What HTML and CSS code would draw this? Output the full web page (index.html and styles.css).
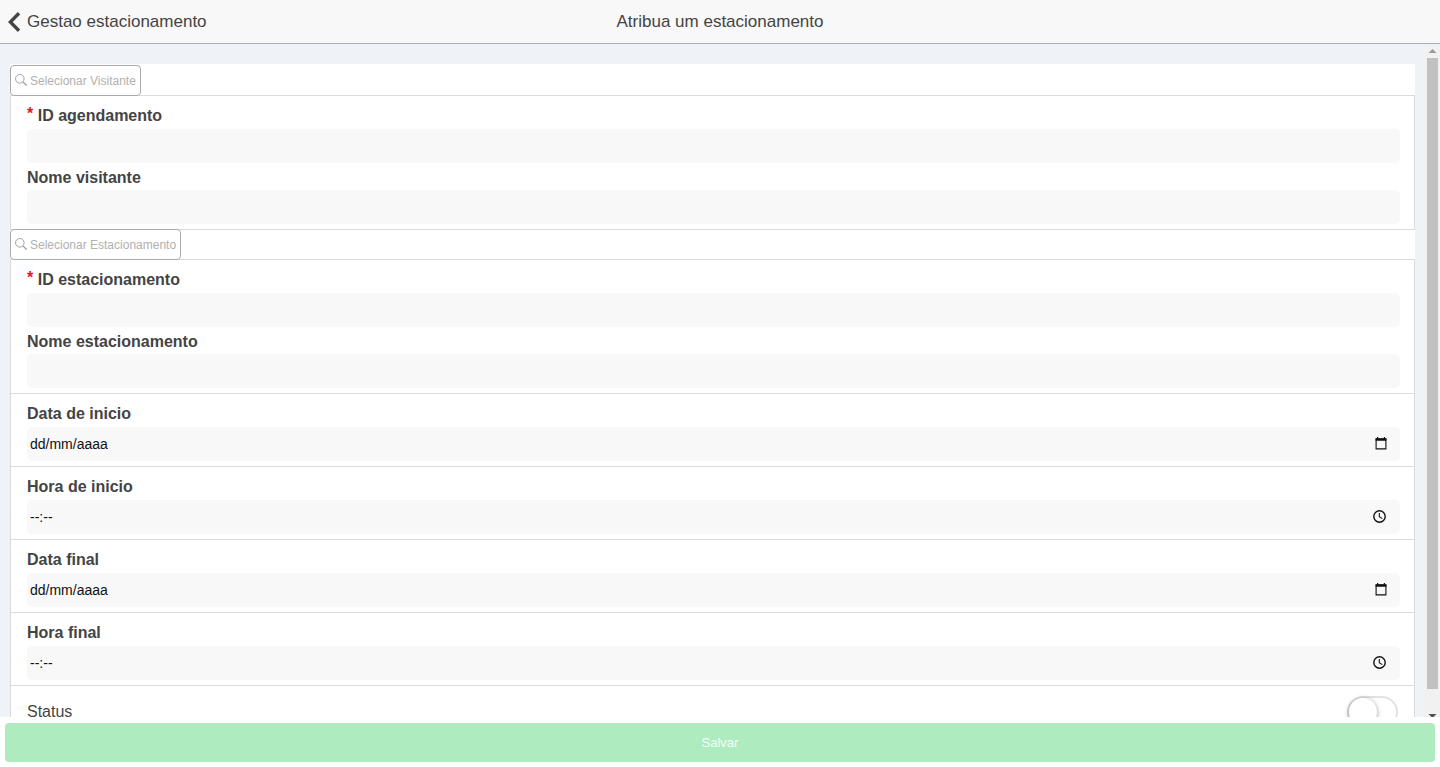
FILE: index.html
```html
<!DOCTYPE html>
<html lang="pt">
  <head>
    <meta charset="UTF-8" />
    <meta name="viewport" content="width=device-width, initial-scale=1.0" />
    <title>Atribua um estacionamento</title>
    <link rel="stylesheet" href="styles.css" />
  </head>
  <body>
    <!-- Header -->
    <header class="navbar">
      <a class="back-link" href="#">
        <svg width="13" height="20" viewBox="0 0 13 20" aria-hidden="true">
          <path d="M11 1.3 2.3 10l8.7 8.7" fill="none" stroke="#444" stroke-width="3.4" />
        </svg>
        Gestao estacionamento
      </a>
      <h1 class="navbar-title">Atribua um estacionamento</h1>
    </header>

    <!-- Form -->
    <div class="view">
      <main class="content">
        <form class="panel" id="parking-form">
          <div class="toolbar">
            <button class="search-button" type="button">
              <svg width="12" height="14" viewBox="0 0 12 14" fill="none" stroke="#999" aria-hidden="true">
                <circle cx="4.8" cy="4.8" r="4.3" stroke-width="0.9" />
                <path d="M7.9 7.9 11.6 11.6" stroke-width="1.3" />
              </svg>
              Selecionar Visitante
            </button>
          </div>
          <div class="group">
            <div class="field">
              <label for="id-agendamento"><span class="required">*</span> ID agendamento</label>
              <input class="field-input" id="id-agendamento" type="text" readonly />
            </div>
            <div class="field">
              <label for="nome-visitante">Nome visitante</label>
              <input class="field-input" id="nome-visitante" type="text" readonly />
            </div>
          </div>

          <div class="toolbar toolbar-lined">
            <button class="search-button" type="button">
              <svg width="12" height="14" viewBox="0 0 12 14" fill="none" stroke="#999" aria-hidden="true">
                <circle cx="4.8" cy="4.8" r="4.3" stroke-width="0.9" />
                <path d="M7.9 7.9 11.6 11.6" stroke-width="1.3" />
              </svg>
              Selecionar Estacionamento
            </button>
          </div>
          <div class="group">
            <div class="field">
              <label for="id-estacionamento"><span class="required">*</span> ID estacionamento</label>
              <input class="field-input" id="id-estacionamento" type="text" readonly />
            </div>
            <div class="field">
              <label for="nome-estacionamento">Nome estacionamento</label>
              <input class="field-input" id="nome-estacionamento" type="text" readonly />
            </div>
          </div>

          <div class="group">
            <div class="field">
              <label for="data-inicio">Data de inicio</label>
              <div class="picker">
                <input class="field-input" id="data-inicio" type="text" placeholder="dd/mm/aaaa" />
                <svg class="picker-icon" width="12" height="14" viewBox="0 0 12 14" aria-hidden="true">
                  <path d="M1.1 2h9.8v9.9H1.1z" fill="none" stroke="#111" stroke-width="1.1" />
                  <path d="M.6 1.3h10.8v2.5H.6zM2 0h1.2v2H2zM8.8 0H10v2H8.8z" fill="#111" />
                </svg>
              </div>
            </div>
          </div>

          <div class="group">
            <div class="field">
              <label for="hora-inicio">Hora de inicio</label>
              <div class="picker">
                <input class="field-input" id="hora-inicio" type="text" placeholder="--:--" />
                <svg class="picker-icon" width="14" height="14" viewBox="0 0 14 14" fill="none" stroke="#111" aria-hidden="true">
                  <circle cx="6.5" cy="6.5" r="5.7" stroke-width="1.4" />
                  <path d="M6.3 3v3.8l3 1.8" stroke-width="1.1" />
                </svg>
              </div>
            </div>
          </div>

          <div class="group">
            <div class="field">
              <label for="data-final">Data final</label>
              <div class="picker">
                <input class="field-input" id="data-final" type="text" placeholder="dd/mm/aaaa" />
                <svg class="picker-icon" width="12" height="14" viewBox="0 0 12 14" aria-hidden="true">
                  <path d="M1.1 2h9.8v9.9H1.1z" fill="none" stroke="#111" stroke-width="1.1" />
                  <path d="M.6 1.3h10.8v2.5H.6zM2 0h1.2v2H2zM8.8 0H10v2H8.8z" fill="#111" />
                </svg>
              </div>
            </div>
          </div>

          <div class="group">
            <div class="field">
              <label for="hora-final">Hora final</label>
              <div class="picker">
                <input class="field-input" id="hora-final" type="text" placeholder="--:--" />
                <svg class="picker-icon" width="14" height="14" viewBox="0 0 14 14" fill="none" stroke="#111" aria-hidden="true">
                  <circle cx="6.5" cy="6.5" r="5.7" stroke-width="1.4" />
                  <path d="M6.3 3v3.8l3 1.8" stroke-width="1.1" />
                </svg>
              </div>
            </div>
          </div>

          <div class="group status-row">
            <label for="status">Status</label>
            <input class="switch" id="status" type="checkbox" />
          </div>
        </form>
      </main>

      <div class="scrollbar" aria-hidden="true">
        <svg class="scrollbar-arrow" width="15" height="14" viewBox="0 0 15 14">
          <path d="M3.5 9 7.5 5l4 4z" fill="#999" />
        </svg>
        <div class="scrollbar-track">
          <div class="scrollbar-thumb"></div>
        </div>
        <svg class="scrollbar-arrow" width="15" height="14" viewBox="0 0 15 14">
          <path d="M3.5 6l4 4 4-4z" fill="#505050" />
        </svg>
      </div>
    </div>

    <!-- Footer -->
    <footer class="footer">
      <button class="save-button" type="submit" form="parking-form">Salvar</button>
    </footer>
  </body>
</html>
```
FILE: styles.css
```css
:root {
  --page-bg: #eff3f7;
  --bar-bg: #f8f8f8;
  --bar-border: #a9b1b4;
  --line: #d9dbdd;
  --text: #444;
  --muted: #b0b0b0;
  --save-bg: #aeebbf;
}

/* Basic Reset */
* {
  margin: 0;
  padding: 0;
  box-sizing: border-box;
}

body {
  display: flex;
  flex-direction: column;
  height: 100vh;
  overflow: hidden;
  background: var(--page-bg);
  color: var(--text);
  font-family: "Liberation Sans", Arial, sans-serif;
  font-size: 16px;
}

button,
input {
  font-family: inherit;
}

/* Header */
.navbar {
  display: grid;
  grid-template-columns: 1fr auto 1fr;
  align-items: center;
  flex: none;
  height: 44px;
  padding: 0 8px;
  background: var(--bar-bg);
  border-bottom: 1px solid var(--bar-border);
}

.back-link {
  display: flex;
  align-items: center;
  gap: 6px;
  color: var(--text);
  font-size: 17px;
  text-decoration: none;
}

.navbar-title {
  font-size: 17px;
  font-weight: normal;
}

/* Scrolling area, its end slides under the footer */
.view {
  display: flex;
  flex: 1;
  min-height: 0;
  margin-bottom: -5px;
}

.content {
  flex: 1;
  padding: 20px 10px 0;
  overflow-y: auto;
  scrollbar-width: none;
}

.scrollbar {
  display: flex;
  flex-direction: column;
  flex: none;
  width: 15px;
  background: #f1f1f1;
}

.scrollbar-arrow {
  flex: none;
}

.scrollbar-track {
  flex: 1;
  padding: 0 2px;
}

.scrollbar-thumb {
  height: 97%;
  background: #c1c1c1;
}

.panel {
  padding-top: 2px;
  background: #fff;
}

/* Search buttons */
.toolbar {
  display: flex;
  height: 29px;
}

.toolbar-lined {
  height: 30px;
  border-top: 1px solid var(--line);
}

.search-button {
  position: relative;
  display: flex;
  align-items: center;
  gap: 3px;
  height: 31px;
  margin-top: -1px;
  padding: 0 4px;
  background: #fff;
  border: 1px solid #aaa;
  border-radius: 4px;
  color: var(--muted);
  font-size: 12px;
  cursor: pointer;
}

/* Fields */
.group {
  padding: 10px 14px 0 16px;
  border: 1px solid var(--line);
  border-bottom: 0;
}

.field {
  padding-bottom: 5px;
}

.group .field:first-child label {
  height: 23px;
}

.field label {
  display: block;
  height: 22px;
  font-weight: bold;
  line-height: 20px;
}

.required {
  color: #e8141b;
  line-height: 1;
  vertical-align: 2px;
}

.field-input {
  display: block;
  width: 100%;
  height: 34px;
  padding: 0 3px;
  background: var(--bar-bg);
  border: 0;
  border-radius: 5px;
  color: #111;
  font-size: 14px;
}

.field-input::placeholder {
  color: #111;
}

.picker {
  display: grid;
  align-items: center;
}

.picker > * {
  grid-area: 1 / 1;
}

.picker-icon {
  justify-self: end;
  margin-right: 13px;
}

/* Status switch */
.status-row {
  display: flex;
  justify-content: space-between;
  align-items: center;
  padding: 10px 16px 14px;
}

.switch {
  appearance: none;
  width: 51px;
  height: 32px;
  background: #fff;
  border: 2px solid #e2e2e2;
  border-radius: 16px;
}

.switch::before {
  content: "";
  display: block;
  width: 28px;
  height: 28px;
  background: #fff;
  border-radius: 50%;
  box-shadow: 0 1px 5px rgba(0, 0, 0, 0.4);
}

.switch:checked {
  background: var(--save-bg);
}

.switch:checked::before {
  margin-left: 19px;
}

/* Footer */
.footer {
  position: relative;
  flex: none;
  padding: 6px 5px 5px;
  background: #fff;
}

.save-button {
  display: block;
  width: 100%;
  height: 39px;
  background: var(--save-bg);
  border: 0;
  border-radius: 4px;
  color: #f4fff7;
  font-size: 13px;
  cursor: pointer;
}
```
